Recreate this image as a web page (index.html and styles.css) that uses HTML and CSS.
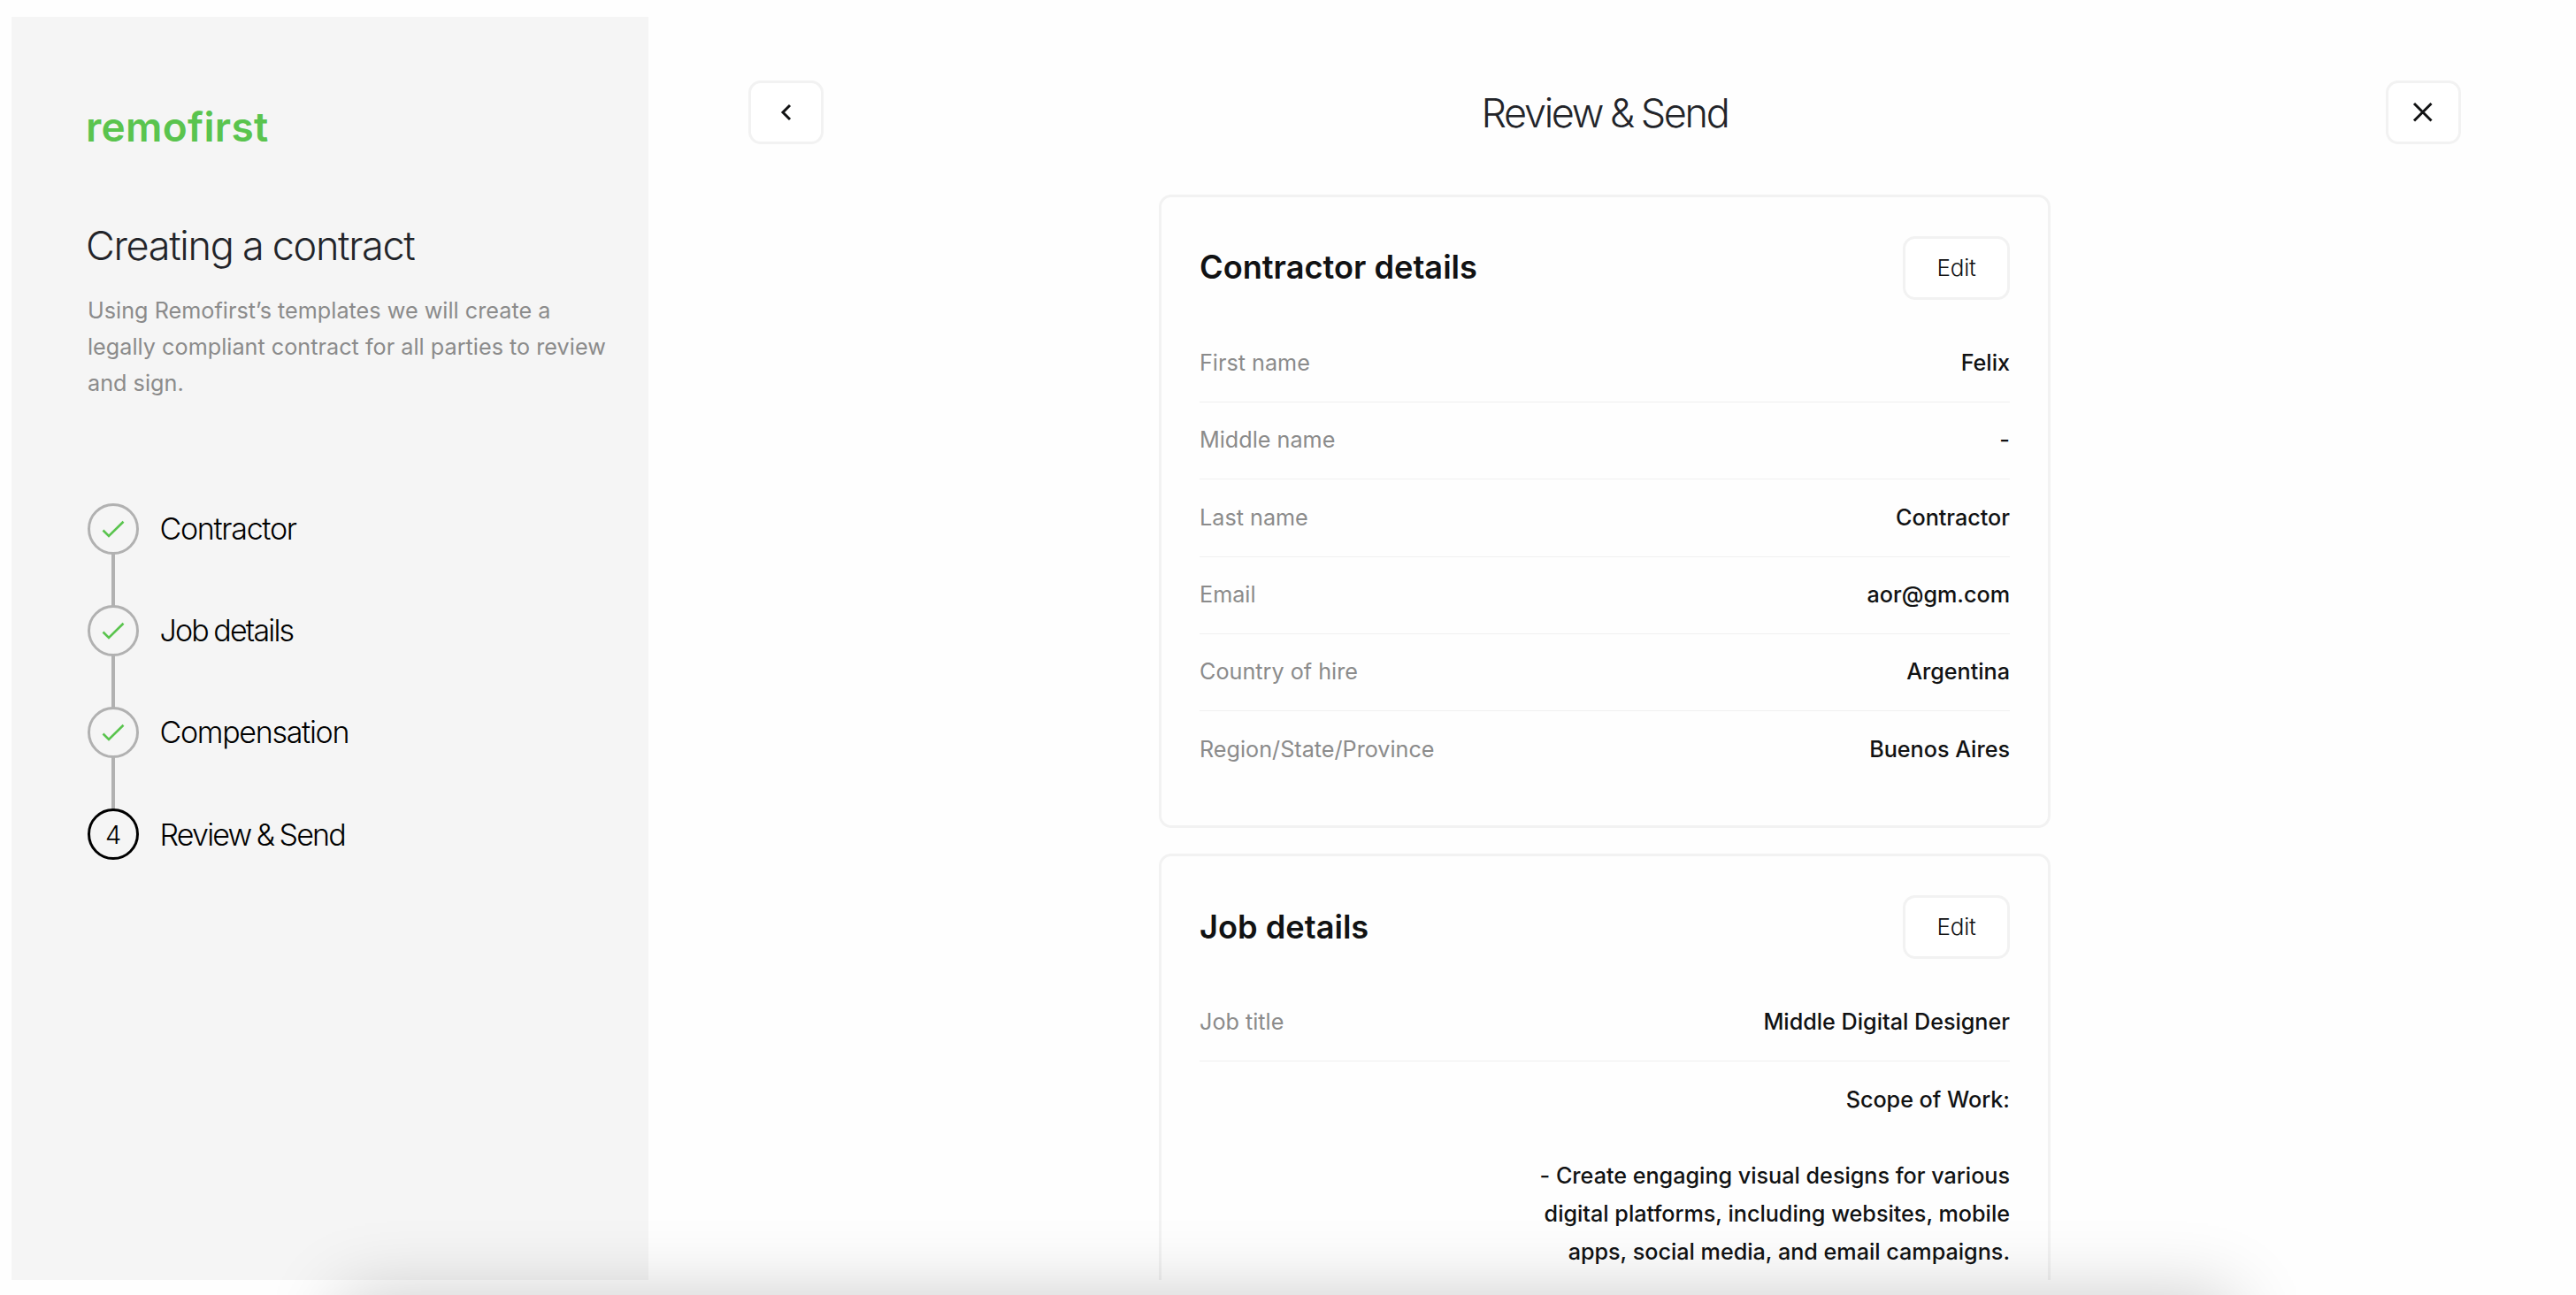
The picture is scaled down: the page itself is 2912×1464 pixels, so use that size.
FILE: index.html
```
<!DOCTYPE html>
<html lang="en">
<head>
<meta charset="utf-8">
<title>Review &amp; Send</title>
<link rel="stylesheet" href="styles.css">
</head>
<body>
<div class="app">
  <aside class="sidebar">
    <div class="logo">remofirst</div>
    <h1 class="sidebar-title">Creating a contract</h1>
    <p class="sidebar-text">Using Remofirst’s templates we will create a legally compliant contract for all parties to review and sign.</p>
    <ol class="steps">
      <li class="step">
        <span class="step-mark"><svg class="check" viewBox="0 0 28 22"><path d="M2.5 12.5 9 19 25.500 2.800"/></svg></span>
        <span class="step-label">Contractor</span>
      </li>
      <li class="step">
        <span class="step-mark"><svg class="check" viewBox="0 0 28 22"><path d="M2.5 12.5 9 19 25.500 2.800"/></svg></span>
        <span class="step-label tight">Job details</span>
      </li>
      <li class="step">
        <span class="step-mark"><svg class="check" viewBox="0 0 28 22"><path d="M2.5 12.5 9 19 25.500 2.800"/></svg></span>
        <span class="step-label">Compensation</span>
      </li>
      <li class="step current">
        <span class="step-mark">4</span>
        <span class="step-label tight">Review &amp; Send</span>
      </li>
    </ol>
  </aside>
  <main class="main">
    <header class="topbar">
      <button class="icon-button" aria-label="Back"><svg width="20" height="24" viewBox="0 0 20 24"><path d="M14 4 6 12l8 8"/></svg></button>
      <h2 class="page-title">Review &amp; Send</h2>
      <button class="icon-button" aria-label="Close"><svg width="24" height="24" viewBox="0 0 24 24"><path d="M2 2l19.500 19.500M21.500 2l-19.500 19.500"/></svg></button>
    </header>
    <section class="card">
      <div class="card-head"><h3>Contractor details</h3><button class="edit">Edit</button></div>
      <dl class="rows">
        <div class="row"><dt>First name</dt><dd>Felix</dd></div>
        <div class="row"><dt>Middle name</dt><dd>-</dd></div>
        <div class="row"><dt>Last name</dt><dd>Contractor</dd></div>
        <div class="row"><dt>Email</dt><dd>aor@gm.com</dd></div>
        <div class="row"><dt>Country of hire</dt><dd>Argentina</dd></div>
        <div class="row"><dt>Region/State/Province</dt><dd>Buenos Aires</dd></div>
      </dl>
    </section>
    <section class="card">
      <div class="card-head"><h3>Job details</h3><button class="edit">Edit</button></div>
      <dl class="rows">
        <div class="row"><dt>Job title</dt><dd>Middle Digital Designer</dd></div>
        <div class="row"><dt></dt><dd>Scope of Work:

- Create engaging visual designs for various digital platforms, including websites, mobile apps, social media, and email campaigns.</dd></div>
      </dl>
    </section>
  </main>
</div>
<div class="bottom-shadow"></div>
</body>
</html>
```
FILE: styles.css
```
* {
  box-sizing: border-box;
  margin: 0;
  padding: 0;
}

body {
  position: relative;
  height: 1464px;
  padding: 19px 0 0 13px;
  overflow: hidden;
  background: #fefefe;
  color: #111213;
  font-family: Inter, "Liberation Sans", sans-serif;
  font-size: 25.2px;
}

.app {
  display: flex;
  height: 1428px;
  overflow: hidden;
}

.sidebar {
  flex: none;
  width: 720px;
  padding: 96px 40px 0 86px;
  background: #f5f5f5;
}

.logo {
  margin-left: -2px;
  color: #5ac44e;
  font-size: 46px;
  font-weight: 600;
  line-height: 56px;
  letter-spacing: 0.3px;
}

.sidebar-title {
  margin: 79px 0 25px -2px;
  color: #222429;
  font-size: 45px;
  font-weight: 330;
  line-height: 56px;
  letter-spacing: -1.3px;
  word-spacing: -1px;
}

.sidebar-text {
  color: #8b8b8b;
  line-height: 41.2px;
  letter-spacing: 0.02px;
}

.steps {
  display: flex;
  flex-direction: column;
  gap: 57.6px;
  margin-top: 114.2px;
  list-style: none;
}

.step {
  position: relative;
  display: flex;
  align-items: center;
  gap: 23.5px;
  height: 57.6px;
  color: #000;
}

.step:not(:last-child)::after {
  content: "";
  position: absolute;
  top: 57px;
  left: 27px;
  width: 4px;
  height: 59px;
  background: #b1b1b1;
}

.step-mark {
  display: flex;
  align-items: center;
  justify-content: center;
  width: 58px;
  height: 58px;
  border: 3px solid #b1b1b1;
  border-radius: 50%;
  font-size: 29px;
  font-weight: 300;
}

.current .step-mark {
  border-color: #000;
}

.check {
  width: 28px;
  height: 22px;
  fill: none;
  stroke: #5ac44e;
  stroke-width: 2.6;
}

.step-label {
  font-size: 34px;
  font-weight: 365;
  letter-spacing: -1.3px;
}

.step-label.tight {
  letter-spacing: -1.8px;
  word-spacing: -1.5px;
}

.main {
  flex: 1;
  display: flex;
  flex-direction: column;
  align-items: center;
  gap: 28.8px;
  padding: 72px 130px 0 113px;
}

.topbar {
  display: flex;
  flex: none;
  align-items: center;
  justify-content: space-between;
  align-self: stretch;
  height: 72px;
  margin-bottom: 28.2px;
}

.icon-button,
.edit {
  display: flex;
  align-items: center;
  justify-content: center;
  height: 72px;
  border: 3px solid #f2f2f2;
  border-radius: 14px;
  background: #fff;
  color: inherit;
  font: inherit;
}

.icon-button {
  width: 85px;
}

.icon-button svg {
  fill: none;
  stroke: #111213;
  stroke-width: 3;
}

.page-title {
  color: #222429;
  font-size: 45px;
  font-weight: 330;
  letter-spacing: -2.3px;
  word-spacing: -1.5px;
}

.card {
  flex: none;
  width: 1008px;
  padding: 44px 43px 42.800px;
  border: 3px solid #f2f2f2;
  border-radius: 14px;
}

.card-head {
  display: flex;
  align-items: center;
  justify-content: space-between;
  margin-bottom: 28.6px;
}

.card-head h3 {
  padding-bottom: 1px;
  font-size: 36.200px;
  font-weight: 600;
}

.edit {
  width: 121px;
  padding-bottom: 1px;
  font-size: 26px;
  font-weight: 350;
  letter-spacing: -0.2px;
}

.row {
  display: flex;
  justify-content: space-between;
  padding: 21.570px 0;
  line-height: 43.200px;
}

.row:not(:last-child) {
  border-bottom: 1px solid #f0f0f0;
}

.row dt {
  color: #8b8b8b;
}

.row dd {
  max-width: 540px;
  font-weight: 500;
  letter-spacing: -0.02px;
  text-align: right;
  white-space: pre-line;
}

.bottom-shadow {
  position: absolute;
  top: 1464px;
  left: 385px;
  width: 2139px;
  height: 400px;
  box-shadow: 0 0 80px rgba(0, 0, 0, 0.2);
}
```
